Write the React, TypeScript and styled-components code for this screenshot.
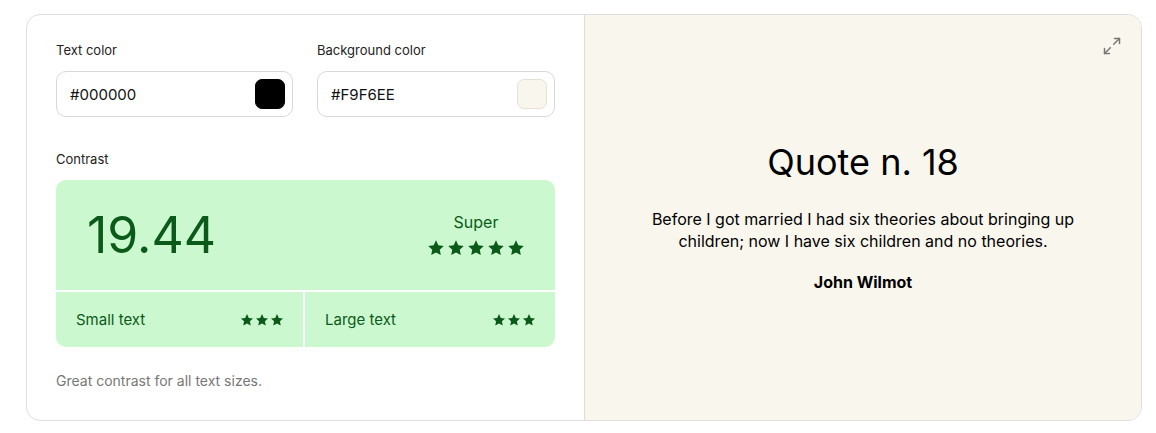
import styled, { createGlobalStyle } from 'styled-components';

const GlobalStyle = createGlobalStyle`
  body {
    margin: 0;
    background: #ffffff;
    font-family: Inter, 'Noto Sans', sans-serif;
    color: #111111;
  }
`;

const StarIcon = ({ size }: { size: number }) => (
  <svg width={size} height={size} viewBox="0 0 24 24" fill="currentColor">
    <path d="M12 1.8l3.1 6.6 7.2.9-5.3 5 1.4 7.1L12 17.9l-6.4 3.5 1.4-7.1-5.3-5 7.2-.9z" />
  </svg>
);

const ExpandIcon = () => (
  <svg width="20" height="20" viewBox="0 0 24 24" fill="none" stroke="currentColor" strokeWidth="1.8" strokeLinecap="round" strokeLinejoin="round">
    <polyline points="15 3 21 3 21 9" />
    <polyline points="9 21 3 21 3 15" />
    <line x1="21" y1="3" x2="14" y2="10" />
    <line x1="3" y1="21" x2="10" y2="14" />
  </svg>
);

interface TColorFieldProps {
  label: string;
  value: string;
}

const ColorField = ({ label, value }: TColorFieldProps) => (
  <S.Field>
    <S.Label>{label}</S.Label>
    <S.InputBox>
      <S.InputValue>{value}</S.InputValue>
      <S.Swatch $color={value} />
    </S.InputBox>
  </S.Field>
);

const Stars = ({ count, size, gap }: { count: number; size: number; gap: number }) => (
  <S.StarRow $gap={gap}>
    {Array.from({ length: count }).map((_, i) => (
      <StarIcon key={i} size={size} />
    ))}
  </S.StarRow>
);

const App = () => {
  const textColor = '#000000';
  const bgColor = '#F9F6EE';

  return (
    <S.Page>
      <GlobalStyle />
      <S.Card>
        <S.Controls>
          <S.FieldRow>
            <ColorField label="Text color" value={textColor} />
            <ColorField label="Background color" value={bgColor} />
          </S.FieldRow>

          <S.Label>Contrast</S.Label>
          <S.ContrastBox>
            <S.ScoreRow>
              <S.Ratio>19.44</S.Ratio>
              <S.Rating>
                <S.RatingName>Super</S.RatingName>
                <Stars count={5} size={18} gap={2} />
              </S.Rating>
            </S.ScoreRow>
            <S.SizeRow>
              <S.SizeCell>
                <span>Small text</span>
                <Stars count={3} size={14} gap={1} />
              </S.SizeCell>
              <S.SizeCell>
                <span>Large text</span>
                <Stars count={3} size={14} gap={1} />
              </S.SizeCell>
            </S.SizeRow>
          </S.ContrastBox>
          <S.Note>Great contrast for all text sizes.</S.Note>
        </S.Controls>

        <S.Preview $bg={bgColor} $fg={textColor}>
          <S.ExpandButton>
            <ExpandIcon />
          </S.ExpandButton>
          <S.QuoteTitle>Quote n. 18</S.QuoteTitle>
          <S.QuoteText>
            Before I got married I had six theories about bringing up children; now I have six children and no
            theories.
          </S.QuoteText>
          <S.Author>John Wilmot</S.Author>
        </S.Preview>
      </S.Card>
    </S.Page>
  );
};

export default App;

const S = {
  Page: styled.div`
    padding: 14px 14px 0 26px;
  `,

  Card: styled.div`
    display: grid;
    grid-template-columns: 558px 1fr;
    height: 407px;
    box-sizing: border-box;
    border: 1px solid #dedede;
    border-radius: 14px;
    overflow: hidden;
  `,

  Controls: styled.div`
    display: flex;
    flex-direction: column;
    padding: 27px 29px 0 29px;
    border-right: 1px solid #e2ddd0;
  `,

  FieldRow: styled.div`
    display: grid;
    grid-template-columns: 237px 1fr;
    gap: 24px;
    margin-bottom: 34px;
  `,

  Field: styled.div`
    display: flex;
    flex-direction: column;
  `,

  Label: styled.div`
    font-size: 13px;
    line-height: 16px;
    color: #222222;
    margin-bottom: 13px;
  `,

  InputBox: styled.div`
    display: flex;
    align-items: center;
    justify-content: space-between;
    height: 46px;
    box-sizing: border-box;
    padding: 0 7px 0 13px;
    border: 1px solid #d8d8d8;
    border-radius: 10px;
  `,

  InputValue: styled.span`
    font-size: 15px;
    color: #111111;
  `,

  Swatch: styled.span<{ $color: string }>`
    width: 30px;
    height: 30px;
    box-sizing: border-box;
    border-radius: 7px;
    background: ${({ $color }) => $color};
    border: 1px solid ${({ $color }) => ($color === '#000000' ? '#000000' : '#e6e1d4')};
  `,

  ContrastBox: styled.div`
    display: flex;
    flex-direction: column;
    gap: 2px;
    height: 167px;
    border-radius: 10px;
    overflow: hidden;
    background: #ffffff;
    color: #0b5a1a;
  `,

  ScoreRow: styled.div`
    display: flex;
    align-items: center;
    justify-content: space-between;
    height: 110px;
    padding: 0 30px 0 31px;
    background: #cbf8cf;
  `,

  Ratio: styled.div`
    font-size: 50px;
    line-height: 1;
  `,

  Rating: styled.div`
    display: flex;
    flex-direction: column;
    align-items: center;
    gap: 7px;
    margin-top: -2px;
  `,

  RatingName: styled.div`
    font-size: 16px;
    line-height: 20px;
  `,

  StarRow: styled.div<{ $gap: number }>`
    display: flex;
    gap: ${({ $gap }) => $gap}px;
  `,

  SizeRow: styled.div`
    display: grid;
    grid-template-columns: 247px 1fr;
    gap: 2px;
    flex: 1;
  `,

  SizeCell: styled.div`
    display: flex;
    align-items: center;
    justify-content: space-between;
    padding: 0 19px 0 20px;
    background: #cbf8cf;
    font-size: 15px;
  `,

  Note: styled.div`
    margin-top: 25px;
    font-size: 14px;
    color: #777777;
  `,

  Preview: styled.div<{ $bg: string; $fg: string }>`
    position: relative;
    display: flex;
    flex-direction: column;
    align-items: center;
    justify-content: center;
    text-align: center;
    background: ${({ $bg }) => $bg};
    color: ${({ $fg }) => $fg};
    padding: 0 60px 3px;
  `,

  ExpandButton: styled.div`
    position: absolute;
    top: 21px;
    right: 19px;
    color: #777777;
    display: flex;
  `,

  QuoteTitle: styled.h2`
    margin: 0 0 24px;
    font-size: 36px;
    font-weight: 400;
    line-height: 44px;
  `,

  QuoteText: styled.p`
    margin: 0 0 20px;
    max-width: 430px;
    font-size: 16px;
    line-height: 22px;
  `,

  Author: styled.div`
    font-size: 16px;
    font-weight: 700;
  `,
};
